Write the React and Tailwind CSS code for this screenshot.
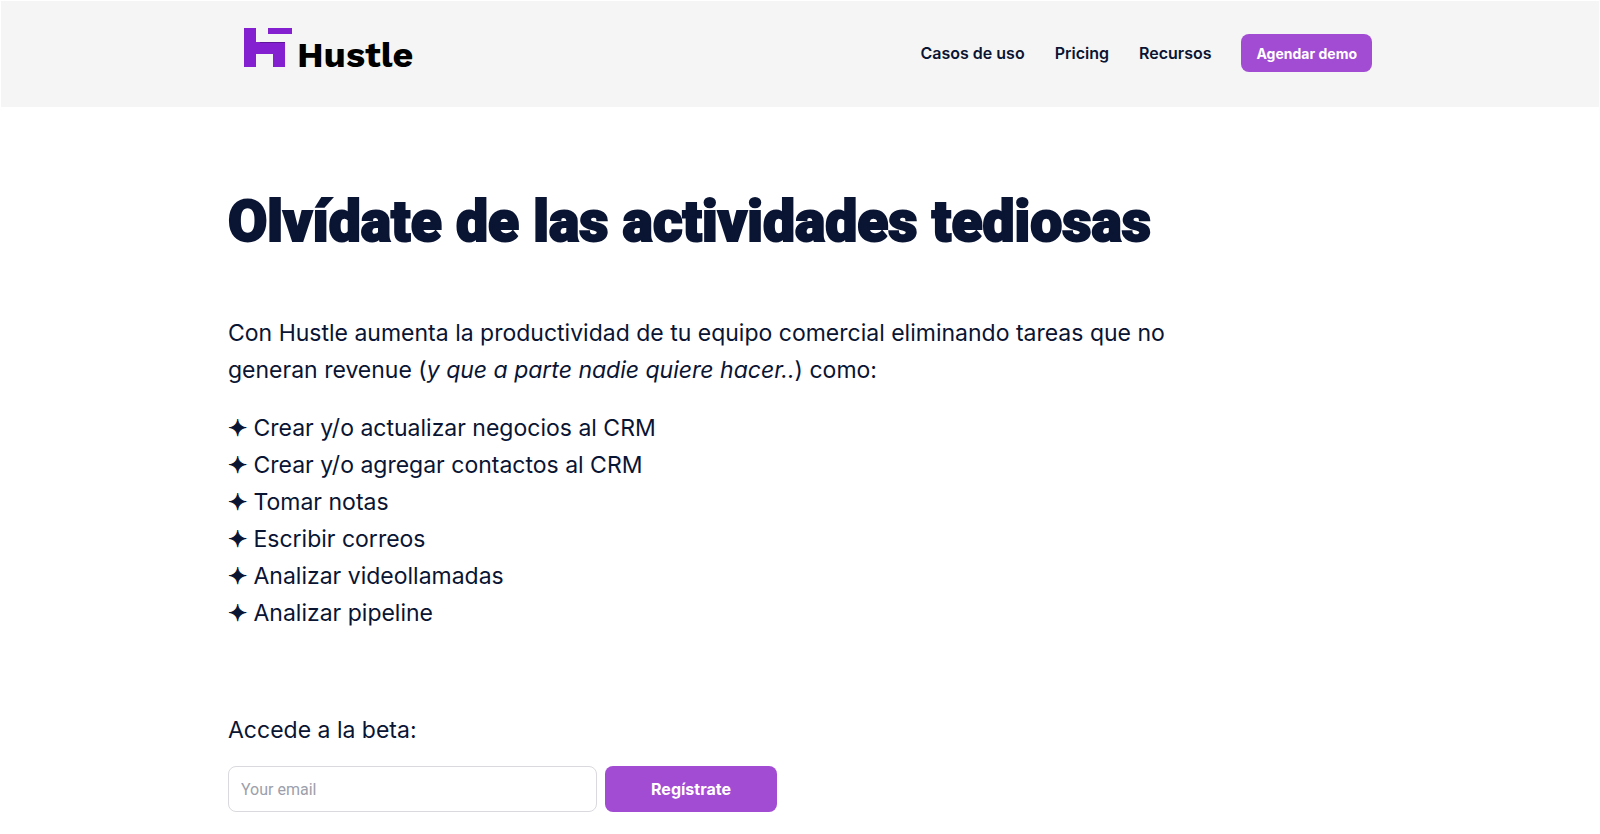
import React, { useState } from "react";

const navLinks = [
  { label: "Casos de uso", href: "#casos" },
  { label: "Pricing", href: "#pricing" },
  { label: "Recursos", href: "#recursos" },
];

const tasks = [
  "Crear y/o actualizar negocios al CRM",
  "Crear y/o agregar contactos al CRM",
  "Tomar notas",
  "Escribir correos",
  "Analizar videollamadas",
  "Analizar pipeline",
];

// Logo
function Logo() {
  return (
    <a href="/" className="flex items-end gap-[5px] text-black">
      <svg viewBox="0 0 48 39" className="h-[39px] w-12" aria-hidden="true">
        <path d="M0 0h12v14h29v25H29V26H12v13H0z" fill="#8420d0" />
        <path d="M24 0h24v6H24z" fill="#8420d0" />
        <path d="M16 14h25v1H16z" fill="#5f1599" />
      </svg>
      <span className="font-['Work_Sans','Inter',sans-serif] text-[36px] leading-[24px] font-bold">
        Hustle
      </span>
    </a>
  );
}

// Header
function Header() {
  return (
    <header className="border border-b-0 border-white bg-[#f5f5f5]">
      <div className="mx-auto flex h-[106px] max-w-[1144px] items-start justify-between">
        <div className="pt-[27px] pl-4">
          <Logo />
        </div>
        <nav className="flex items-center gap-[30px] pt-[33px]">
          {navLinks.map((link) => (
            <a key={link.label} href={link.href} className="text-[16px] font-semibold">
              {link.label}
            </a>
          ))}
          <button className="h-[38px] rounded-lg bg-[#a24cd3] px-[15px] text-[14px] font-bold text-white">
            Agendar demo
          </button>
        </nav>
      </div>
    </header>
  );
}

// Signup form
function BetaForm() {
  const [email, setEmail] = useState("");

  return (
    <form className="mt-20" onSubmit={(e) => e.preventDefault()}>
      <label htmlFor="email" className="block text-[23px] leading-[37px]">
        Accede a la beta:
      </label>
      <div className="mt-[17px] flex gap-2">
        <input
          id="email"
          type="email"
          value={email}
          onChange={(e) => setEmail(e.target.value)}
          placeholder="Your email"
          className="h-[46px] w-[369px] rounded-lg border border-[#d9d9de] px-3 font-['Roboto',sans-serif] text-[16px] placeholder:text-[#9ca0aa]"
        />
        <button
          type="submit"
          className="h-[46px] w-[172px] rounded-lg bg-[#a24cd3] text-[16px] font-bold text-white"
        >
          Regístrate
        </button>
      </div>
    </form>
  );
}

// Hero
function Hero() {
  return (
    <main className="mx-auto max-w-[1144px] pt-[79px]">
      <h1 className="font-['Roboto',sans-serif] text-[57px] leading-[72px] font-black [-webkit-text-stroke:2px_#0a1433]">
        Olvídate de las actividades tediosas
      </h1>
      <div className="mt-[57px] max-w-[940px] text-[23px] leading-[37px]">
        <p>
          Con Hustle aumenta la productividad de tu equipo comercial eliminando tareas que no
          generan revenue (<em>y que a parte nadie quiere hacer..</em>) como:
        </p>
        <ul className="mt-[21px]">
          {tasks.map((task) => (
            <li key={task}>
              <span className="[-webkit-text-stroke:1px_#0a1433]">✦</span> {task}
            </li>
          ))}
        </ul>
      </div>
      <BetaForm />
    </main>
  );
}

export default function App() {
  return (
    <div className="bg-white font-['Inter',sans-serif] text-[#0a1433]">
      <Header />
      <Hero />
    </div>
  );
}
